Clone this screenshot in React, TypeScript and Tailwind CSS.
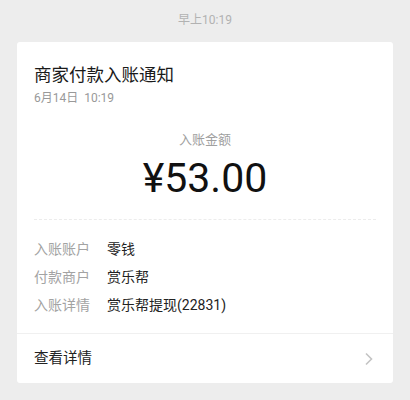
const ROWS = [
  { label: '入账账户', value: '零钱' },
  { label: '付款商户', value: '赏乐帮' },
  { label: '入账详情', value: '赏乐帮提现(22831)' },
];

const FONT = "font-['Roboto','Noto_Sans_CJK_SC',sans-serif]";

export default function App() {
  return (
    <div className={`w-[410px] h-[400px] bg-[#ededed] px-[17px] ${FONT}`}>
      <div className="h-[42px] flex items-center justify-center pb-[3px]">
        <span className="text-[12px] text-[#b2b2b2]">早上10:19</span>
      </div>

      <div className="bg-white rounded-[3px] h-[341px] flex flex-col">
        <div className="px-[17px] pt-[21px]">
          <div className="text-[17.5px] leading-[24px] text-[#1a1a1a]">商家付款入账通知</div>
          <div className="text-[12px] leading-[16px] mt-[3px] text-[#999]">6月14日&nbsp;&nbsp;10:19</div>
        </div>

        <div className="flex flex-col items-center mt-[25px]">
          <div className="text-[13px] leading-[18px] text-[#a0a0a0]">入账金额</div>
          <div className="text-[41px] leading-[48px] mt-[5px] text-[#111]">¥53.00</div>
        </div>

        {/* dashed divider */}
        <div className="mx-[17px] mt-[17px] border-t border-dashed border-[#ececec]" />

        <div className="px-[17px] pt-[19px] flex flex-col gap-[8px]">
          {ROWS.map(({ label, value }) => (
            <div key={label} className="flex text-[14px] leading-[20px]">
              <span className="w-[73px] text-[#a3a3a3]">{label}</span>
              <span className="text-[#222]">{value}</span>
            </div>
          ))}
        </div>

        <div className="mt-auto border-t border-[#f0f0f0] h-[50px] px-[17px] flex items-center justify-between">
          <span className="text-[14.5px] text-[#222]">查看详情</span>
          <svg width="10" height="14" viewBox="0 0 10 14" className="mr-[2px]">
            <path d="M2 1.5 L7.5 7 L2 12.5" fill="none" stroke="#c4c4c4" strokeWidth="1.6" />
          </svg>
        </div>
      </div>
    </div>
  );
}
